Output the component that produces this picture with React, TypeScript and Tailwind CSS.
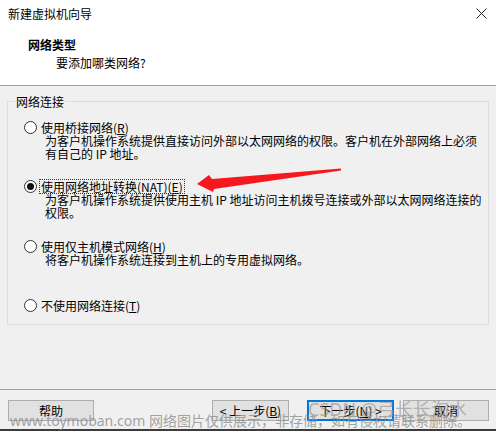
import React from 'react';

const font = "font-['Microsoft_YaHei_UI','Noto_Sans_CJK_SC',sans-serif]";

function Radio({ checked }: { checked?: boolean }) {
  return (
    <span className="w-[13px] h-[13px] rounded-full border border-[#333] bg-white flex items-center justify-center shrink-0">
      {checked && <span className="w-[7px] h-[7px] rounded-full bg-[#111]" />}
    </span>
  );
}

function Option({
  label,
  mnemonic,
  after,
  lines,
  checked,
  focused,
  className,
}: {
  label: string;
  mnemonic: string;
  after?: string;
  lines: string[];
  checked?: boolean;
  focused?: boolean;
  className?: string;
}) {
  return (
    <div className={className}>
      <div className="flex items-center h-[14px] pl-[16px] gap-[3px]">
        <Radio checked={checked} />
        <span
          className={
            focused
              ? 'px-[1px] outline outline-1 outline-dotted outline-[#333] leading-[13px]'
              : 'px-[1px] leading-[13px]'
          }
        >
          {label}(<u>{mnemonic}</u>){after}
        </span>
      </div>
      <div className="pl-[37px]">
        {lines.map((l, i) => (
          <div key={i} className="h-[13px] leading-[13px] whitespace-pre">
            {l}
          </div>
        ))}
      </div>
    </div>
  );
}

function Btn({ children, w, focus }: { children: React.ReactNode; w: string; focus?: boolean }) {
  return (
    <div
      className={`${w} h-[21px] flex items-center justify-center bg-[#e1e1e1] ${
        focus ? 'border-2 border-[#0078d7]' : 'border border-[#adadad]'
      }`}
    >
      {children}
    </div>
  );
}

export default function App() {
  return (
    <div className={`relative w-[496px] h-[431px] overflow-hidden bg-[#f0f0f0] text-[12px] text-black ${font}`}>
      {/* header */}
      <div className="h-[86px] bg-white border-b border-[#a0a0a0]">
        <div className="flex items-center justify-between h-[27px] pl-[8px] pr-[9px]">
          <span className="leading-[13px]">新建虚拟机向导</span>
          <svg width="11" height="11" viewBox="0 0 11 11" className="mt-[-1px]">
            <path d="M0.5 0.5 L10.5 10.5 M10.5 0.5 L0.5 10.5" stroke="#222" strokeWidth="1" />
          </svg>
        </div>
        <div className="pl-[28px] pt-[11px] font-bold leading-[13px]">网络类型</div>
        <div className="pl-[56px] pt-[5px] leading-[13px]">要添加哪类网络?</div>
      </div>

      {/* group box */}
      <fieldset className="mx-[7px] mt-[9px] h-[230px] border border-[#dcdcdc] px-0 pb-0">
        <legend className="ml-[7px] px-[1px] leading-[13px]">网络连接</legend>
        <Option
          className="mt-[12px]"
          label="使用桥接网络"
          mnemonic="R"
          lines={[
            '为客户机操作系统提供直接访问外部以太网网络的权限。客户机在外部网络上必须',
            '有自己的 IP 地址。',
          ]}
        />
        <Option
          className="mt-[19px]"
          checked
          focused
          label="使用网络地址转换(NAT)"
          mnemonic="E"
          lines={['为客户机操作系统提供使用主机 IP 地址访问主机拨号连接或外部以太网网络连接的', '权限。']}
        />
        <Option
          className="mt-[20px]"
          label="使用仅主机模式网络"
          mnemonic="H"
          lines={['将客户机操作系统连接到主机上的专用虚拟网络。', '']}
        />
        <Option className="mt-[19px]" label="不使用网络连接" mnemonic="T" lines={[]} />
      </fieldset>

      {/* footer */}
      <div className="absolute left-0 right-0 top-[389px] border-t border-[#a0a0a0] h-[40px]">
        <div className="flex items-center pl-[8px] pr-[7px] pt-[10px]">
          <Btn w="w-[86px]">帮助</Btn>
          <div className="ml-auto flex items-center">
            <Btn w="w-[77px]">
              &lt; 上一步(<u>B</u>)
            </Btn>
            <div className="ml-[18px]">
              <Btn w="w-[87px]" focus>
                下一步(<u>N</u>) &gt;
              </Btn>
            </div>
            <div className="ml-[9px]">
              <Btn w="w-[86px]">取消</Btn>
            </div>
          </div>
        </div>
      </div>
      <div className="absolute left-0 right-0 bottom-0 h-[2px] bg-[#3c3c3c]" />

      {/* red arrow annotation */}
      <svg className="absolute left-0 top-0 pointer-events-none" width="496" height="431">
        <polygon
          points="197,184 209,175 212,179 341,168.5 341,170.5 214,189 213,192"
          fill="#f5191e"
        />
      </svg>

      {/* watermarks */}
      <div className="absolute left-[10px] top-[413px] text-[14px] leading-[16px] text-[#8c8c8c]/80 whitespace-nowrap pointer-events-none font-['Noto_Sans','Noto_Sans_CJK_SC',sans-serif]">
        www.toymoban.com 网络图片仅供展示，非存储，如有侵权请联系删除。
      </div>
      <div className="absolute left-[308px] top-[399px] text-[18px] leading-[20px] text-[#9a9a9a]/70 whitespace-nowrap pointer-events-none font-['Noto_Sans','Noto_Sans_CJK_SC',sans-serif]">
        CSDN @弓长长淘水
      </div>
    </div>
  );
}
